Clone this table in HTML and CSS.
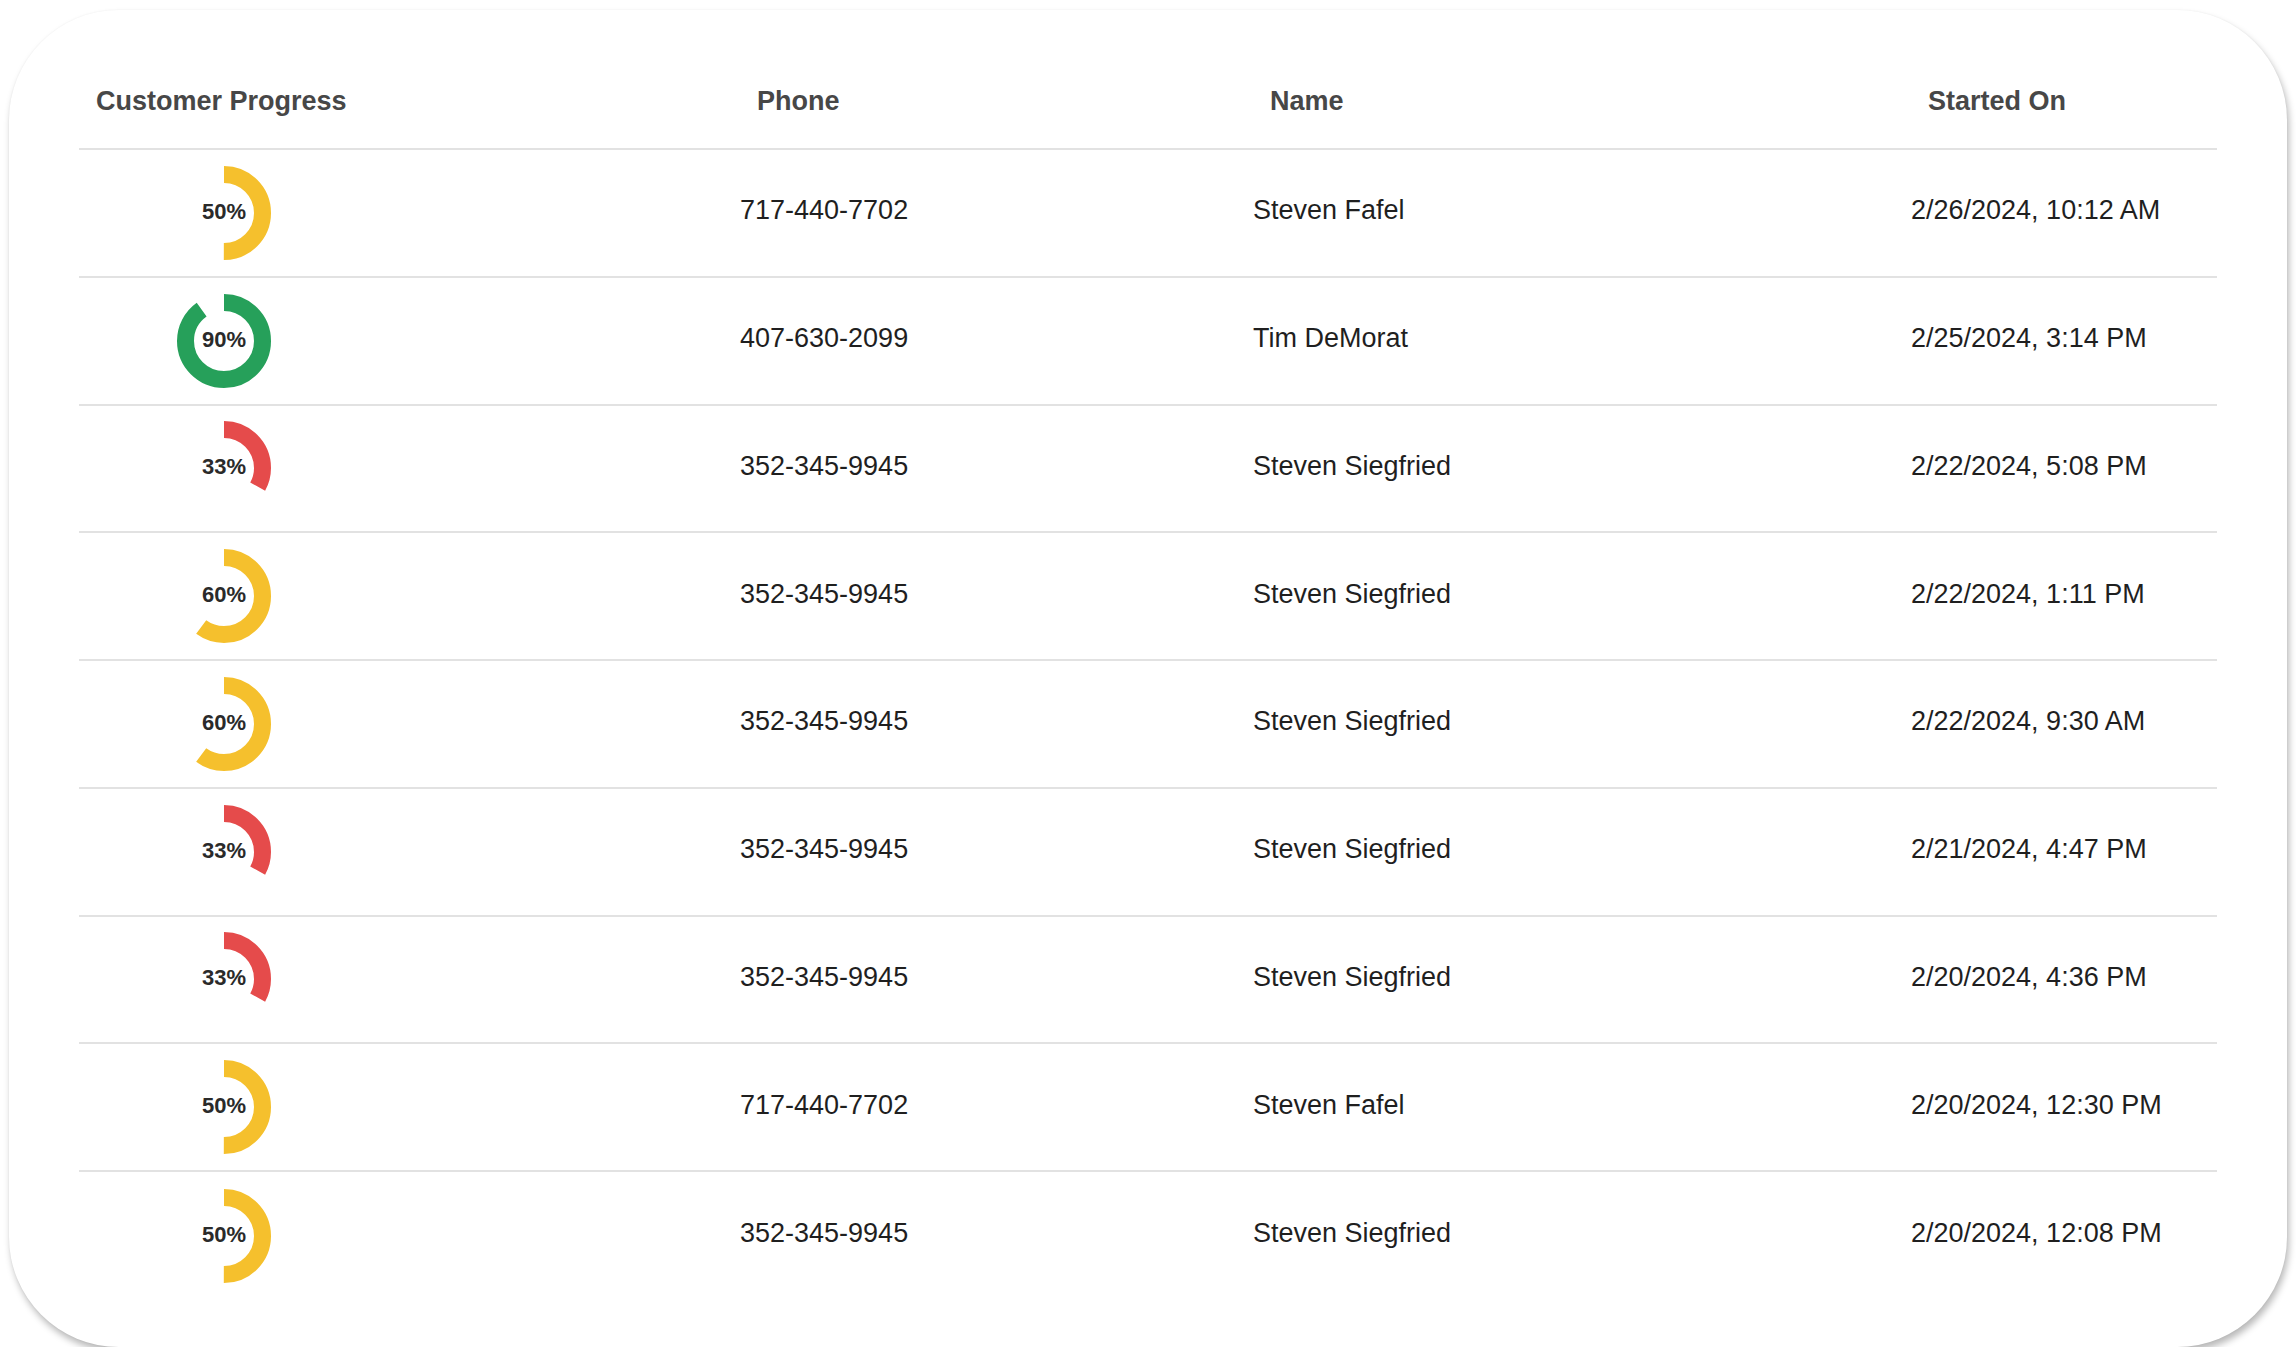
FILE: index.html
```html
<!DOCTYPE html>
<html lang="en">
<head>
<meta charset="utf-8">
<title>Customer Progress</title>
<link rel="stylesheet" href="styles.css">
</head>
<body>
<div class="page">
  <div class="card">
    <div class="table">
      <div class="row head">
        <div class="th">Customer Progress</div>
        <div class="th">Phone</div>
        <div class="th">Name</div>
        <div class="th">Started On</div>
      </div>

      <div class="row">
        <div class="td prog">
          <div class="ring">
            <svg viewBox="0 0 94 94" class="ring-svg"><circle cx="47" cy="47" r="38.5" class="arc yellow" stroke-dasharray="120.95 400"/></svg>
            <span class="pct">50%</span>
          </div>
        </div>
        <div class="td">717-440-7702</div>
        <div class="td">Steven Fafel</div>
        <div class="td">2/26/2024, 10:12 AM</div>
      </div>

      <div class="row">
        <div class="td prog">
          <div class="ring">
            <svg viewBox="0 0 94 94" class="ring-svg"><circle cx="47" cy="47" r="38.5" class="arc green" stroke-dasharray="217.71 400"/></svg>
            <span class="pct">90%</span>
          </div>
        </div>
        <div class="td">407-630-2099</div>
        <div class="td">Tim DeMorat</div>
        <div class="td">2/25/2024, 3:14 PM</div>
      </div>

      <div class="row">
        <div class="td prog">
          <div class="ring">
            <svg viewBox="0 0 94 94" class="ring-svg"><circle cx="47" cy="47" r="38.5" class="arc red" stroke-dasharray="79.83 400"/></svg>
            <span class="pct">33%</span>
          </div>
        </div>
        <div class="td">352-345-9945</div>
        <div class="td">Steven Siegfried</div>
        <div class="td">2/22/2024, 5:08 PM</div>
      </div>

      <div class="row">
        <div class="td prog">
          <div class="ring">
            <svg viewBox="0 0 94 94" class="ring-svg"><circle cx="47" cy="47" r="38.5" class="arc yellow" stroke-dasharray="145.14 400"/></svg>
            <span class="pct">60%</span>
          </div>
        </div>
        <div class="td">352-345-9945</div>
        <div class="td">Steven Siegfried</div>
        <div class="td">2/22/2024, 1:11 PM</div>
      </div>

      <div class="row">
        <div class="td prog">
          <div class="ring">
            <svg viewBox="0 0 94 94" class="ring-svg"><circle cx="47" cy="47" r="38.5" class="arc yellow" stroke-dasharray="145.14 400"/></svg>
            <span class="pct">60%</span>
          </div>
        </div>
        <div class="td">352-345-9945</div>
        <div class="td">Steven Siegfried</div>
        <div class="td">2/22/2024, 9:30 AM</div>
      </div>

      <div class="row">
        <div class="td prog">
          <div class="ring">
            <svg viewBox="0 0 94 94" class="ring-svg"><circle cx="47" cy="47" r="38.5" class="arc red" stroke-dasharray="79.83 400"/></svg>
            <span class="pct">33%</span>
          </div>
        </div>
        <div class="td">352-345-9945</div>
        <div class="td">Steven Siegfried</div>
        <div class="td">2/21/2024, 4:47 PM</div>
      </div>

      <div class="row">
        <div class="td prog">
          <div class="ring">
            <svg viewBox="0 0 94 94" class="ring-svg"><circle cx="47" cy="47" r="38.5" class="arc red" stroke-dasharray="79.83 400"/></svg>
            <span class="pct">33%</span>
          </div>
        </div>
        <div class="td">352-345-9945</div>
        <div class="td">Steven Siegfried</div>
        <div class="td">2/20/2024, 4:36 PM</div>
      </div>

      <div class="row">
        <div class="td prog">
          <div class="ring">
            <svg viewBox="0 0 94 94" class="ring-svg"><circle cx="47" cy="47" r="38.5" class="arc yellow" stroke-dasharray="120.95 400"/></svg>
            <span class="pct">50%</span>
          </div>
        </div>
        <div class="td">717-440-7702</div>
        <div class="td">Steven Fafel</div>
        <div class="td">2/20/2024, 12:30 PM</div>
      </div>

      <div class="row last">
        <div class="td prog">
          <div class="ring">
            <svg viewBox="0 0 94 94" class="ring-svg"><circle cx="47" cy="47" r="38.5" class="arc yellow" stroke-dasharray="120.95 400"/></svg>
            <span class="pct">50%</span>
          </div>
        </div>
        <div class="td">352-345-9945</div>
        <div class="td">Steven Siegfried</div>
        <div class="td">2/20/2024, 12:08 PM</div>
      </div>
    </div>
  </div>
</div>
</body>
</html>
```

FILE: styles.css
```css
* { box-sizing: border-box; }

html, body {
  margin: 0;
  padding: 0;
  background: #ffffff;
}

body {
  font-family: "Liberation Sans", Arial, sans-serif;
  color: #222222;
}

.page {
  padding: 10px 9px 0 9px;
}

.card {
  background: #ffffff;
  border-radius: 110px;
  padding: 46px 70px 47px 70px;
  box-shadow: 2px 5px 7px rgba(0, 0, 0, 0.28), 0 0 2px rgba(0, 0, 0, 0.05);
}

.table {
  display: flex;
  flex-direction: column;
}

.row {
  display: grid;
  grid-template-columns: 661px 513px 658px 1fr;
  align-items: center;
  height: 127.75px;
  border-bottom: 2px solid #e2e2e2;
}

.row.last {
  border-bottom: none;
}

.row.head {
  height: 94px;
  padding-bottom: 2px;
}

.th {
  padding-left: 17px;
  font-size: 27px;
  font-weight: 700;
  color: #474747;
  white-space: nowrap;
}

.td {
  font-size: 27px;
  color: #1f1f1f;
  white-space: nowrap;
  padding-bottom: 4px;
}

.td.prog {
  padding-left: 98px;
  padding-bottom: 0;
}

.ring {
  position: relative;
  width: 94px;
  height: 94px;
  display: flex;
  align-items: center;
  justify-content: center;
}

.ring-svg {
  position: absolute;
  left: 0;
  top: 0;
  width: 94px;
  height: 94px;
  transform: rotate(-90deg);
}

.arc {
  fill: none;
  stroke-width: 17;
  stroke-linecap: butt;
}

.arc.yellow { stroke: #f5c02d; }
.arc.green { stroke: #26a05a; }
.arc.red { stroke: #e54b4b; }

.pct {
  position: relative;
  font-size: 22px;
  font-weight: 700;
  color: #2a2a2a;
  margin-bottom: 2px;
}
```
